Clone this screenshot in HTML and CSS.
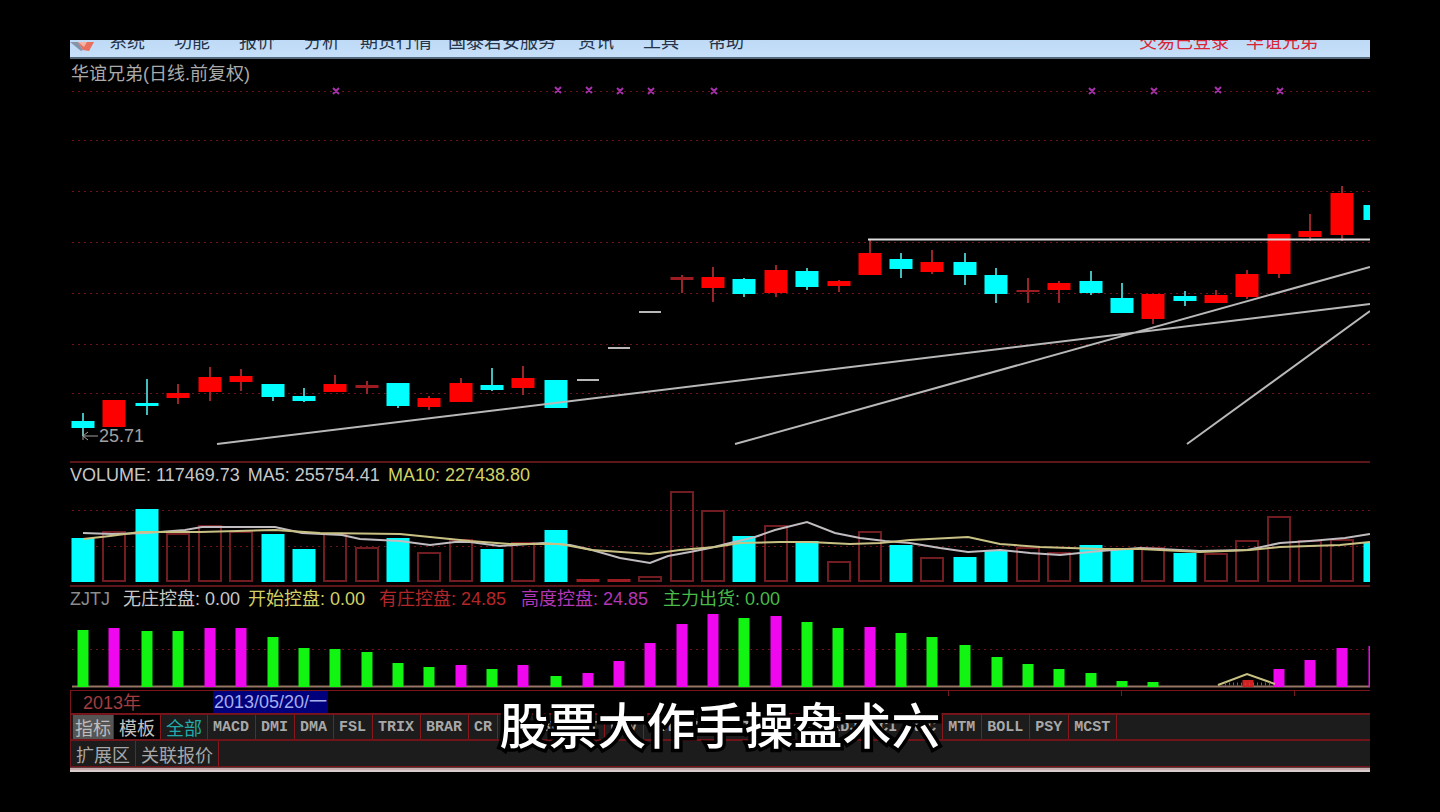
FILE: index.html
```html
<!DOCTYPE html>
<html lang="zh-CN">
<head>
<meta charset="utf-8">
<title>华谊兄弟 日线</title>
<link rel="stylesheet" href="styles.css">
</head>
<body>
<main class="screen">
  <nav class="menu">
    <svg class="logo" viewBox="0 0 26 10" aria-hidden="true">
      <path d="M0 0H8L13 8L11 9Z" fill="#8794a8"/>
      <path d="M8 0H24L19 9L13 8Z" fill="#e8705c"/>
      <path d="M8 0L14 5L17 0Z" fill="#f4b3a5"/>
    </svg>
    <div class="menu-items">
      <a href="#">系统</a><a href="#">功能</a><a href="#">报价</a><a href="#">分析</a><a href="#">期货行情</a><a href="#">国泰君安服务</a><a href="#">资讯</a><a href="#">工具</a><a href="#">帮助</a>
    </div>
    <div class="status"><span>交易已登录</span><span>华谊兄弟</span></div>
  </nav>

  <section class="panel">
    <h1 class="title">华谊兄弟(日线.前复权)</h1>
    <svg class="chart" viewBox="70 85 1300 376" role="img" aria-label="日线图">
      <path class="dots" d="M72 91.500H1370M72 140.500H1370M72 191.500H1370M72 242.500H1370M72 293.500H1370M72 344.500H1370M72 393.500H1370"/>
      <path class="marks" d="M333 88l6 6m0-6l-6 6M555 87l6 6m0-6l-6 6M586 87l6 6m0-6l-6 6M617 88l6 6m0-6l-6 6M648 88l6 6m0-6l-6 6M711 88l6 6m0-6l-6 6M1089 88l6 6m0-6l-6 6M1151 88l6 6m0-6l-6 6M1215 87l6 6m0-6l-6 6M1277 88l6 6m0-6l-6 6"/>
      <path class="wick down" d="M83 413V436M147 379V415M273 384V401M304 388V402M398 383V408M492 368V391M744 278V297M807 268V290M901 253V278M965 253V285M996 268V303M1091 271V295M1122 283V313M1185 291V306"/>
      <path class="wick up" d="M178 384V404M210 367V401M241 369V391M335 375V392M367 381V394M429 396V410M461 378V402M523 366V395M682 275V293M713 267V302M776 265V297M839 280V292M870 240V275M932 250V274M1028 278V303M1059 281V303M1153 294V324M1216 290V303M1247 270V299M1279 234V278M1310 214V241M1342 186V241"/>
      <path class="body down" d="M83 421V428M147 403V406M273 384V397M304 396V401M398 383V406M492 385V390M556 380V408M744 279V294M807 271V287M901 259V269M965 262V275M996 275V294M1091 281V293M1122 298V313M1185 296V301M1375 205V220"/>
      <path class="body up" d="M114 400V427M178 393V398M210 377V392M241 376V382M335 384V392M429 398V407M461 383V402M523 378V388M713 277V288M776 270V293M839 281V286M870 253V275M932 262V272M1059 283V290M1153 294V319M1216 295V303M1247 274V297M1279 234V274M1310 231V237M1342 193V235"/>
      <path class="body faint" d="M367 385V388M682 277V280M1028 290V292"/>
      <path class="trend" d="M577 380H599M608 348H630M639 312H661M217 444L1370 304M735 444L1370 267M1187 444L1370 311"/>
      <path class="level" d="M868 239.500H1370"/>
      <path class="arrow" d="M98 436H83M88 432l-5 4 5 4M83 430V440"/>
      <text class="low" x="99" y="442">25.71</text>
    </svg>
  </section>

  <section class="panel">
    <div class="title volume-title"><span>VOLUME: 117469.73</span><span>MA5: 255754.41</span><span class="yellow">MA10: 227438.80</span></div>
    <svg class="chart" viewBox="70 487 1300 98" role="img" aria-label="成交量">
      <path class="dots" d="M72 510.500H1370M72 546.500H1370"/>
      <path class="hollow" d="M103 532h22v49h-22zM167 534h22v47h-22zM199 526h22v55h-22zM230 532h22v49h-22zM324 534h22v47h-22zM356 548h22v33h-22zM418 553h22v28h-22zM450 540h22v41h-22zM512 543h22v38h-22zM639 577h22v4h-22zM671 492h22v89h-22zM702 511h22v70h-22zM765 526h22v55h-22zM828 562h22v19h-22zM859 532h22v49h-22zM921 558h22v23h-22zM1017 548h22v33h-22zM1048 553h22v28h-22zM1142 548h22v33h-22zM1205 554h22v27h-22zM1236 541h22v40h-22zM1268 517h22v64h-22zM1299 541h22v40h-22zM1331 540h22v41h-22z"/>
      <path class="body faint" d="M588 579V582M619 579V582"/>
      <path class="body down" d="M83 538V582M147 509V582M273 534V582M304 549V582M398 538V582M492 549V582M556 530V582M744 536V582M807 541V582M901 545V582M965 557V582M996 550V582M1091 545V582M1122 548V582M1185 553V582M1375 542V582"/>
      <path class="ma5" d="M83 533L112 534L147 533L185 530L202 527H275L302 533L342 535L360 539L400 541L430 545L455 542H470L500 546L543 543L570 545L592 550L620 558L650 563L668 556L690 552L710 548L730 543L755 537L775 530L807 522L835 533L860 538L885 541L910 543L940 548L968 552L1000 550L1030 553L1060 555L1100 551L1140 548L1200 551L1247 550L1280 543L1310 541L1345 538L1370 534"/>
      <path class="ma10" d="M83 539L110 536L140 532H200L275 530L320 533L400 534L440 538L470 541L510 544H560L592 550L650 554L680 550L715 547L740 543L780 542H810L850 544L880 543L910 540L968 537L1000 544L1040 547L1100 549H1140L1200 552L1250 550L1280 547L1340 545L1370 542"/>
    </svg>
  </section>

  <section class="panel last">
    <div class="title control-title"><span class="grey">ZJTJ</span><span>无庄控盘: 0.00</span><span class="yellow">开始控盘: 0.00</span><span class="red">有庄控盘: 24.85</span><span class="purple">高度控盘: 24.85</span><span class="green">主力出货: 0.00</span></div>
    <svg class="chart" viewBox="70 611 1300 79" role="img" aria-label="控盘指标">
      <path class="dots" d="M72 649.500H1370"/>
      <path class="base" d="M72 686.500H1370"/>
      <path class="bar lime" d="M83 630V687M147 631V687M178 631V687M273 637V687M304 648V687M335 649V687M367 652V687M398 663V687M429 667V687M492 669V687M556 676V687M744 618V687M807 622V687M838 628V687M901 633V687M932 637V687M965 645V687M997 657V687M1028 664V687M1059 669V687M1091 673V687M1122 681V687M1153 682V687"/>
      <path class="bar magenta" d="M114 628V687M210 628V687M241 628V687M461 665V687M523 665V687M588 673V687M619 661V687M650 643V687M682 624V687M713 614V687M776 616V687M870 627V687M1279 669V687M1310 660V687M1342 648V687M1374 646V687"/>
      <path class="bar ember" d="M1248 680V687"/>
      <path class="ma10" d="M1218 685L1247 674L1275 684"/>
      <path class="house" d="M1225 684H1273"/>
    </svg>
  </section>

  <div class="axis"><span class="year">2013年</span><time class="date" datetime="2013-05-20">2013/05/20/一</time>
    <span class="ticks"><i></i><i></i><i></i></span></div>

  <div class="tabs">
    <button class="cn current">指标</button><button class="cn template">模板</button><button class="cn all">全部</button><button>MACD</button><button>DMI</button><button>DMA</button><button>FSL</button><button>TRIX</button><button>BRAR</button><button class="short">CR</button><button class="short">VR</button><button>OBV</button><button>ASI</button><button>EMV</button><button>VOL-TDX</button><button>RSI</button><button class="short">WR</button><button>SAR</button><button>KDJ</button><button>CCI</button><button>ROC</button><button>MTM</button><button>BOLL</button><button>PSY</button><button>MCST</button>
  </div>
  <div class="tabs lower"><button class="cn">扩展区</button><button class="cn">关联报价</button></div>
  <div class="edge"></div>
  <p class="caption">股票大作手操盘术六</p>
</main>
</body>
</html>
```
FILE: styles.css
```css
* { box-sizing: border-box; }

body {
  margin: 0;
  padding: 40px 70px;
  background: #000;
  color: #c8c8c8;
  font: 18px/20px "Liberation Sans", "Noto Sans CJK SC", sans-serif;
}

.screen { position: relative; overflow: hidden; }

/* Menu strip, cut by the top edge of the frame */
.menu {
  display: flex;
  align-items: flex-end;
  height: 19px;
  padding: 0 52px 5px 0;
  overflow: hidden;
  background: linear-gradient(#bfdaf6, #c6e0fa);
  border-bottom: 2px solid #53697a;
  white-space: nowrap;
}
.logo { width: 26px; height: 10px; margin-right: 13px; }
.menu-items {
  display: grid;
  grid-template-columns: 65px 65px 65px 56px 88px 130px 65px 65px auto;
}
.menu a { color: #253448; text-decoration: none; }
.status { display: flex; gap: 17px; margin-left: auto; color: #d92535; }

/* Chart panels */
.panel { border-bottom: 2px solid #5c161a; }
.panel.last { border-bottom: 0; }
.title {
  height: 24px;
  margin: 0;
  padding: 2px 0;
  font-size: 18px;
  font-weight: 400;
  line-height: 20px;
  white-space: nowrap;
}
h1.title { height: 26px; padding: 5px 1px; color: #aaa; }
.volume-title { display: flex; gap: 8px; }
.control-title {
  display: grid;
  grid-template-columns: 53px 125px 131px 142px 142px auto;
}
.grey { color: #8c8c8c; }
.yellow { color: #d2d264; }
.red { color: #b3262a; }
.purple { color: #b237b8; }
.green { color: #48bb48; }

.chart { display: block; width: 100%; height: auto; }
.chart path { fill: none; }
.dots { stroke: #6e1419; stroke-width: 1; stroke-dasharray: 2 4; }
.marks { stroke: #a631aa; stroke-width: 2; }
.down { stroke: #00ffff; }
.up { stroke: #ff0000; }
.body { stroke-width: 23; }
.wick { stroke-width: 2; }
.wick.down { stroke: #42bcbc; }
.wick.up { stroke: #99242a; }
.faint { stroke: #9d1c22; }
.trend { stroke: #b8b8b8; stroke-width: 2; }
.level { stroke: #dcdcdc; stroke-width: 2; }
.arrow { stroke: #a0a0a0; stroke-width: 1; }
.low { fill: #a0a0a0; font-size: 18px; }
.hollow { stroke: #701c20; stroke-width: 2; }
.ma5 { stroke: #c0bcc0; stroke-width: 2; }
.ma10 { stroke: #c9c184; stroke-width: 2; }
.base { stroke: #967564; stroke-width: 2; }
.bar { stroke-width: 11; }
.lime { stroke: #12f512; }
.magenta { stroke: #ef08ef; }
.ember { stroke: #d02222; }
.house { stroke: #6f6451; stroke-width: 3; stroke-dasharray: 1 3; }

/* Date axis */
.axis {
  display: grid;
  grid-template-columns: 142px auto 1fr;
  align-items: start;
  height: 24px;
  border: solid #7b151b;
  border-width: 1px 0 1px 1px;
  white-space: nowrap;
}
.year { padding: 2px 12px; color: #a23d40; }
.date {
  padding: 1px 1px;
  background: #00007c;
  color: #a6aef0;
}
.ticks { display: flex; justify-content: flex-end; gap: 172px; padding-right: 75px; }
.ticks i { width: 1px; height: 5px; background: #701b20; }

/* Indicator tabs */
.tabs {
  display: flex;
  height: 27px;
  padding-left: 2px;
  background: #1c1c1c;
  border: solid #711419;
  border-width: 1px 0 2px 1px;
  white-space: nowrap;
}
.tabs button {
  flex: none;
  padding: 2px 6px 0 5px;
  border: 0;
  border-right: 1px solid #8a171c;
  background: none;
  color: #a8a8a8;
  font: bold 15px/22px "Liberation Mono", monospace;
}
.tabs .short { padding: 2px 5px 0; }
.tabs .cn { padding: 0 5px; font: 18px/24px "Noto Sans CJK SC", sans-serif; }
.tabs .current { padding: 0 2px; background: #555; color: #bcbcbc; }
.tabs .template { background: #000; color: #c2c2c2; }
.tabs .all { color: #22aaaa; }
.lower { height: 26px; border-width: 0 0 1px 1px; padding-left: 0; }

.edge {
  height: 5px;
  background: #c7adad;
  border-top: 1px solid #5c3c3c;
  border-bottom: 2px solid #d8cccc;
}

/* Subtitle laid over the picture */
.caption {
  position: absolute;
  bottom: 19px;
  left: 0;
  width: 100%;
  margin: 0;
  color: #fff;
  font: 500 49px/60px "Noto Sans CJK SC", sans-serif;
  text-align: center;
  white-space: nowrap;
  paint-order: stroke fill;
  -webkit-text-stroke: 7px #000;
}
```
